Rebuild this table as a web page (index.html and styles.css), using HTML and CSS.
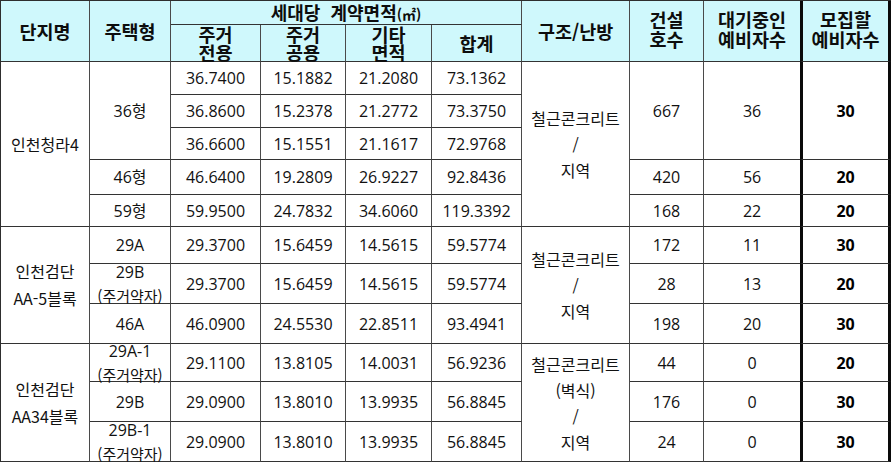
FILE: index.html
```html
<!DOCTYPE html>
<html lang="ko">
<head>
<meta charset="utf-8">
<title>예비자 모집</title>
<link rel="stylesheet" href="styles.css">
</head>
<body>
<table class="grid">
  <colgroup>
    <col class="c1"><col class="c2"><col class="c3"><col class="c4"><col class="c5">
    <col class="c6"><col class="c7"><col class="c8"><col class="c9"><col class="c10">
  </colgroup>
  <thead>
    <tr class="h22">
      <th rowspan="2">단지명</th>
      <th rowspan="2">주택형</th>
      <th colspan="4" class="area">세대당&nbsp; 계약면적<span class="unit">(㎡)</span></th>
      <th rowspan="2">구조/난방</th>
      <th rowspan="2" class="two"><div class="hl">건설<br>호수</div></th>
      <th rowspan="2" class="two nor"><div class="hl">대기중인<br>예비자수</div></th>
      <th rowspan="2" class="two last"><div class="hl">모집할<br>예비자수</div></th>
    </tr>
    <tr class="h37">
      <th><div class="sub">주거<br>전용</div></th>
      <th><div class="sub">주거<br>공용</div></th>
      <th><div class="sub">기타<br>면적</div></th>
      <th>합계</th>
    </tr>
  </thead>
  <tbody>
    <tr class="h33">
      <td rowspan="5" class="name">인천청라4</td>
      <td rowspan="3">36형</td>
      <td>36.7400</td><td>15.1882</td><td>21.2080</td><td>73.1362</td>
      <td rowspan="5" class="struct">철근콘크리트<br>/<br>지역</td>
      <td rowspan="3">667</td>
      <td rowspan="3" class="nor">36</td>
      <td rowspan="3" class="last b">30</td>
    </tr>
    <tr class="h33">
      <td>36.8600</td><td>15.2378</td><td>21.2772</td><td>73.3750</td>
    </tr>
    <tr class="h32">
      <td>36.6600</td><td>15.1551</td><td>21.1617</td><td>72.9768</td>
    </tr>
    <tr class="h35">
      <td>46형</td>
      <td>46.6400</td><td>19.2809</td><td>26.9227</td><td>92.8436</td>
      <td>420</td><td class="nor">56</td><td class="last b">20</td>
    </tr>
    <tr class="h32">
      <td>59형</td>
      <td>59.9500</td><td>24.7832</td><td>34.6060</td><td>119.3392</td>
      <td>168</td><td class="nor">22</td><td class="last b">20</td>
    </tr>
    <tr class="h37">
      <td rowspan="3" class="name">인천검단<br>AA-5블록</td>
      <td>29A</td>
      <td>29.3700</td><td>15.6459</td><td>14.5615</td><td>59.5774</td>
      <td rowspan="3" class="struct">철근콘크리트<br>/<br>지역</td>
      <td>172</td><td class="nor">11</td><td class="last b">30</td>
    </tr>
    <tr class="h40">
      <td><div class="type2">29B<br><span class="weak">(주거약자)</span></div></td>
      <td>29.3700</td><td>15.6459</td><td>14.5615</td><td>59.5774</td>
      <td>28</td><td class="nor">13</td><td class="last b">20</td>
    </tr>
    <tr class="h40">
      <td>46A</td>
      <td>46.0900</td><td>24.5530</td><td>22.8511</td><td>93.4941</td>
      <td>198</td><td class="nor">20</td><td class="last b">30</td>
    </tr>
    <tr class="h38">
      <td rowspan="3" class="name">인천검단<br>AA34블록</td>
      <td><div class="type2">29A-1<br><span class="weak">(주거약자)</span></div></td>
      <td>29.1100</td><td>13.8105</td><td>14.0031</td><td>56.9236</td>
      <td rowspan="3" class="struct">철근콘크리트<br>(벽식)<br>/<br>지역</td>
      <td>44</td><td class="nor">0</td><td class="last b">20</td>
    </tr>
    <tr class="h40">
      <td>29B</td>
      <td>29.0900</td><td>13.8010</td><td>13.9935</td><td>56.8845</td>
      <td>176</td><td class="nor">0</td><td class="last b">30</td>
    </tr>
    <tr class="h40">
      <td><div class="type2">29B-1<br><span class="weak">(주거약자)</span></div></td>
      <td>29.0900</td><td>13.8010</td><td>13.9935</td><td>56.8845</td>
      <td>24</td><td class="nor">0</td><td class="last b end">30</td>
    </tr>
  </tbody>
</table>
</body>
</html>
```
FILE: styles.css
```css
html, body {
  margin: 0;
  padding: 0;
  background: #ffffff;
}

body {
  font-family: "Open Sans", "Noto Sans CJK KR", sans-serif;
  color: #111111;
}

.grid {
  table-layout: fixed;
  border-collapse: separate;
  border-spacing: 0;
  width: 891px;
  border-top: 1px solid #2e2e2e;
  border-left: 1px solid #2e2e2e;
}

.c1 { width: 89px; }
.c2 { width: 81px; }
.c3 { width: 90px; }
.c4 { width: 85px; }
.c5 { width: 86px; }
.c6 { width: 90px; }
.c7 { width: 108px; }
.c8 { width: 74px; }
.c9 { width: 96px; }
.c10 { width: 91px; }

.grid th,
.grid td {
  padding: 0;
  text-align: center;
  vertical-align: middle;
  border-right: 1px solid #4a4a4a;
  border-bottom: 1px solid #333333;
  white-space: nowrap;
  overflow: visible;
}

.grid th {
  background: #cff8fc;
  font-family: "Noto Sans CJK KR", "Open Sans", sans-serif;
  font-weight: 700;
  font-size: 18.5px;
  line-height: 22px;
  color: #0d0d0d;
}

.grid td {
  font-size: 16px;
  line-height: 22px;
}

.h22 { height: 22px; }
.h32 { height: 32px; }
.h33 { height: 33px; }
.h35 { height: 35px; }
.h37 { height: 37px; }
.h38 { height: 38px; }
.h40 { height: 40px; }

.grid th.area {
  font-size: 18px;
  line-height: 20px;
  padding-top: 1px;
}

.unit {
  font-size: 14px;
}

.sub {
  line-height: 18px;
}

.grid th.two {
  padding-bottom: 4px;
}

.hl {
  line-height: 20px;
}

.grid .nor {
  border-right: 0;
}

.grid .last {
  border-left: 3px solid #0a0a0a;
  border-right: 3px solid #0a0a0a;
}

.grid .end {
  box-shadow: 0 2px 0 #0a0a0a;
}

.grid td.b {
  font-weight: 700;
  color: #000000;
}

.grid td.name {
  font-family: "Noto Sans CJK KR", "Open Sans", sans-serif;
  line-height: 27px;
}

.grid td.struct {
  font-family: "Noto Sans CJK KR", "Open Sans", sans-serif;
  line-height: 26px;
}

.type2 {
  line-height: 24px;
  margin: -6px 0;
}

.weak {
  font-family: "Noto Sans CJK KR", sans-serif;
  font-size: 15px;
}
```
